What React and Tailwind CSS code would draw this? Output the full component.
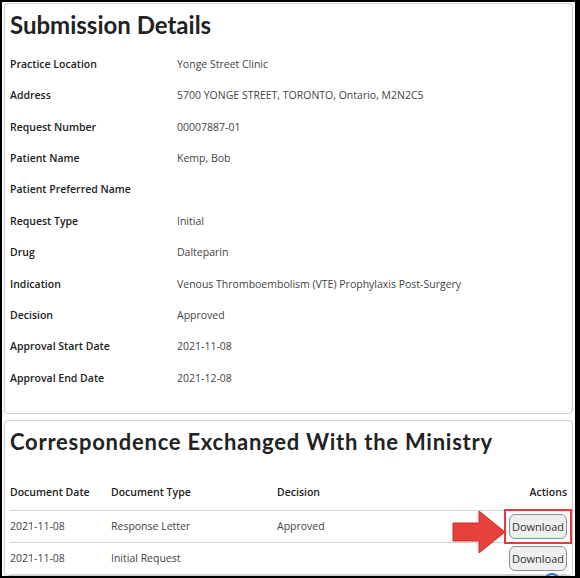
const details = [
  ["Practice Location", "Yonge Street Clinic"],
  ["Address", "5700 YONGE STREET, TORONTO, Ontario, M2N2C5"],
  ["Request Number", "00007887-01"],
  ["Patient Name", "Kemp, Bob"],
  ["Patient Preferred Name", ""],
  ["Request Type", "Initial"],
  ["Drug", "Dalteparin"],
  ["Indication", "Venous Thromboembolism (VTE) Prophylaxis Post-Surgery"],
  ["Decision", "Approved"],
  ["Approval Start Date", "2021-11-08"],
  ["Approval End Date", "2021-12-08"],
];

const documents = [
  { date: "2021-11-08", type: "Response Letter", decision: "Approved", highlight: true },
  { date: "2021-11-08", type: "Initial Request", decision: "" },
];

const DownloadButton = () => (
  <button className="h-[25px] w-[58px] rounded-[6px] border border-[#8f8f8f] bg-[#efefef] text-[11px] text-[#333]">
    Download
  </button>
);

const Arrow = () => (
  <svg
    width="54"
    height="44"
    viewBox="0 0 54 44"
    className="absolute left-[-57px] top-[-4px]"
  >
    <path
      d="M1 13 L27 13 L27 1 L53 22 L27 43 L27 31 L1 31 Z"
      fill="#e8403a"
      stroke="#c62f2a"
      strokeWidth="1"
    />
  </svg>
);

const App = () => {
  return (
    <div
      className="w-[580px] h-[578px] bg-black pt-[2px] pl-[2px] pr-[5px] pb-[2px] overflow-hidden"
      style={{ fontFamily: "'Open Sans', 'Liberation Sans', sans-serif" }}
    >
      <div className="h-full bg-white pt-[1px] px-[2px] flex flex-col gap-[6px] overflow-hidden">
        <div className="border border-[#cdcdcd] rounded-[4px] px-[5px] pt-[4px] pb-[19px]">
          <h1
            className="text-[24px] leading-[34px] font-bold text-[#222] mb-[7px]"
            style={{ fontFamily: "Lato, 'Open Sans', sans-serif" }}
          >
            Submission Details
          </h1>

          {details.map(([label, value]) => (
            <div key={label} className="flex items-center h-[31.4px] text-[10.5px]">
              <div className="w-[167px] font-semibold text-[#222]">{label}</div>
              <div className="text-[#444]">{value}</div>
            </div>
          ))}
        </div>

        <div className="relative flex-1 border border-[#cdcdcd] rounded-[4px] px-[5px] pt-[5px]">
          <h2
            className="text-[22px] leading-[32px] font-bold text-[#222] tracking-[0.75px]"
            style={{ fontFamily: "Lato, 'Open Sans', sans-serif" }}
          >
            Correspondence Exchanged With the Ministry
          </h2>

          <div className="mt-[19px] text-[10.5px]">
            <div className="flex items-center h-[34px] pb-[2px] border-b border-[#d4d4d4] font-semibold text-[#222]">
              <div className="w-[101px]">Document Date</div>
              <div className="w-[166px]">Document Type</div>
              <div className="flex-1">Decision</div>
              <div className="text-right">Actions</div>
            </div>

            {documents.map((doc) => (
              <div
                key={doc.type}
                className="flex items-center h-[32px] border-b border-[#d4d4d4] text-[#444]"
              >
                <div className="w-[101px]">{doc.date}</div>
                <div className="w-[166px]">{doc.type}</div>
                <div className="flex-1">{doc.decision}</div>
                <div className="relative">
                  {doc.highlight && (
                    <>
                      <Arrow />
                      <div className="absolute -inset-[5px] border-2 border-[#e23b3b]" />
                    </>
                  )}
                  <DownloadButton />
                </div>
              </div>
            ))}
          </div>

          <div className="absolute right-[12px] bottom-[-14px] w-[16px] h-[16px] rounded-full border-2 border-[#2f6fd6]" />
        </div>
      </div>
    </div>
  );
};

export default App;
